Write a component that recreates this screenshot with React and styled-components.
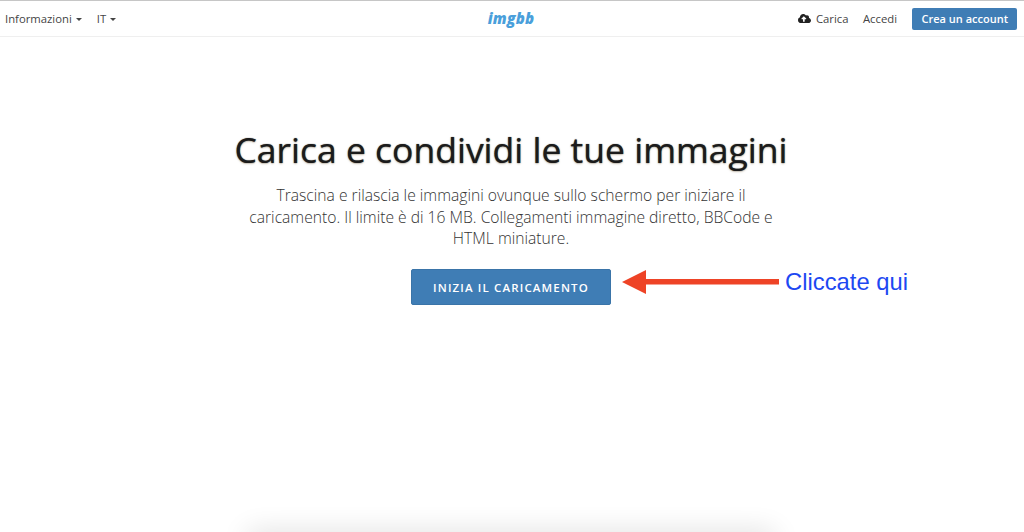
import styled, { createGlobalStyle } from "styled-components";
import { FaCloudUploadAlt } from "react-icons/fa";

const GlobalStyle = createGlobalStyle`
  html, body {
    margin: 0;
    padding: 0;
    background: #fff;
    overflow: hidden;
  }
`;

const Page = styled.div`
  display: flex;
  flex-direction: column;
  height: 532px;
  overflow: hidden;
  font-family: "Open Sans", sans-serif;
  color: #333;
`;

const TopBar = styled.header`
  display: grid;
  grid-template-columns: 1fr auto 1fr;
  align-items: center;
  height: 35px;
  flex: none;
  padding: 0 7px 0 5px;
  border-top: 1px solid #c6c6c6;
  border-bottom: 1px solid #efefef;
`;

const NavGroup = styled.nav`
  display: flex;
  align-items: center;
  justify-content: ${(p) => (p.$end ? "flex-end" : "flex-start")};
  gap: ${(p) => (p.$end ? "14.5px" : "15px")};
`;

const NavItem = styled.a`
  display: flex;
  align-items: center;
  gap: ${(p) => (p.$icon ? "5px" : "4px")};
  font-size: 11.3px;
  color: #444;
`;

const Caret = styled.span`
  width: 0;
  height: 0;
  margin-top: 2px;
  border-top: 3px solid #444;
  border-left: 3px solid transparent;
  border-right: 3px solid transparent;
`;

const Logo = styled.span`
  font-family: "Open Sans", sans-serif;
  font-size: 15px;
  font-weight: 800;
  font-style: italic;
  color: #4a9fdb;
  letter-spacing: 0.2px;
  margin-top: -2px;
`;

const AccountButton = styled.a`
  display: flex;
  align-items: center;
  height: 22px;
  padding: 0 9px 0 10px;
  font-size: 11px;
  font-weight: 600;
  color: #fff;
  background: #3f7db5;
  border-radius: 2px;
`;

const Hero = styled.main`
  flex: 1;
  display: flex;
  flex-direction: column;
  align-items: center;
  padding: 89px 2px 0 0;
`;

const Title = styled.h1`
  margin: 0;
  font-size: 35.5px;
  line-height: 46px;
  font-weight: 400;
  color: #1b1b1b;
  text-shadow: 0 0 1px rgba(0, 0, 0, 0.7), 0 1px 2px rgba(120, 100, 60, 0.35);
`;

const Lead = styled.p`
  width: 535px;
  margin: 13px 0 0;
  font-size: 15.65px;
  line-height: 21.5px;
  font-weight: 300;
  text-align: center;
  color: #333;
`;

const UploadButton = styled.button`
  position: relative;
  display: block;
  width: 200px;
  height: 36px;
  margin-top: 19.5px;
  padding: 0;
  border: 1px solid #3a74a8;
  border-radius: 2px;
  background: #3f7db5;
  color: #fff;
  font-family: "Open Sans", sans-serif;
  font-size: 11.5px;
  font-weight: 600;
  letter-spacing: 1.15px;
`;

const Callout = styled.div`
  position: absolute;
  left: 209px;
  top: -6px;
  display: flex;
  align-items: center;
  gap: 6px;
  height: 36px;
`;

const CalloutText = styled.span`
  font-family: "Liberation Sans", Arial, sans-serif;
  font-size: 23.8px;
  font-weight: 400;
  letter-spacing: 0;
  white-space: nowrap;
  color: #1d48f2;
`;

const BottomPanel = styled.div`
  flex: none;
  align-self: center;
  width: 526px;
  height: 20px;
  margin: 0 2px -20px 0;
  background: #fff;
  box-shadow: 0 0 28px rgba(0, 0, 0, 0.14);
`;

function Arrow() {
  return (
    <svg width="158" height="26" viewBox="0 0 158 26" style={{ display: "block" }}>
      <path d="M1 13 L25 1 V10 H158 V15.5 H25 V25 Z" fill="#ee4326" />
    </svg>
  );
}

export default function App() {
  return (
    <>
      <GlobalStyle />
      <Page>
        <TopBar>
          <NavGroup>
            <NavItem>Informazioni <Caret /></NavItem>
            <NavItem>IT <Caret /></NavItem>
          </NavGroup>
          <Logo>imgbb</Logo>
          <NavGroup $end>
            <NavItem $icon><FaCloudUploadAlt size={13} color="#222" /> Carica</NavItem>
            <NavItem>Accedi</NavItem>
            <AccountButton>Crea un account</AccountButton>
          </NavGroup>
        </TopBar>
        <Hero>
          <Title>Carica e condividi le tue immagini</Title>
          <Lead>
            Trascina e rilascia le immagini ovunque sullo schermo per iniziare il
            caricamento. Il limite è di 16 MB. Collegamenti immagine diretto, BBCode e
            HTML miniature.
          </Lead>
          <UploadButton>
            INIZIA IL CARICAMENTO
            <Callout>
              <Arrow />
              <CalloutText>Cliccate qui</CalloutText>
            </Callout>
          </UploadButton>
        </Hero>
        <BottomPanel />
      </Page>
    </>
  );
}
